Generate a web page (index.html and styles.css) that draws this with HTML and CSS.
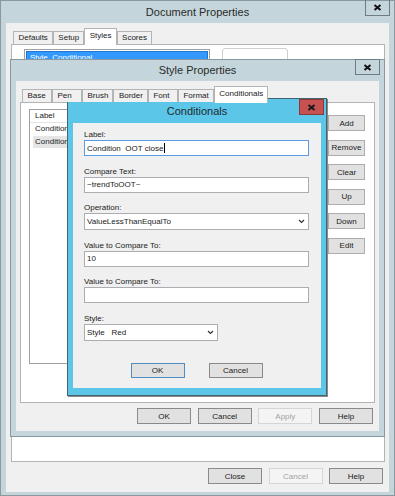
FILE: index.html
```html
<!DOCTYPE html>
<html lang="en">

<head>
    <meta charset="UTF-8">
    <title>Conditionals</title>
    <link rel="stylesheet" href="styles.css">
</head>

<body>
    <div class="desktop">

        <!-- Document Properties -->
        <div class="window doc-win">
            <div class="titlebar doc-title">Document Properties
                <span class="close-btn doc-close">
                    <svg width="9" height="7" viewBox="0 0 9 7"><path d="M1.5 1l6 5M7.5 1l-6 5" stroke="#111" stroke-width="2"/></svg>
                </span>
            </div>
            <div class="client doc-client">
                <div class="tabs doc-tabs">
                    <span class="tab">Defaults</span>
                    <span class="tab">Setup</span>
                    <span class="tab tab-on">Styles</span>
                    <span class="tab">Scores</span>
                </div>
                <div class="page doc-page">
                    <div class="doc-list">
                        <div class="doc-item">Style  Conditional</div>
                    </div>
                    <div class="doc-box"></div>
                </div>
                <div class="btn-row doc-btns">
                    <span class="btn btn-dark">Close</span>
                    <span class="btn btn-off">Cancel</span>
                    <span class="btn btn-dark">Help</span>
                </div>
            </div>
        </div>

        <!-- Style Properties -->
        <div class="window style-win">
            <div class="titlebar style-title">Style Properties
                <span class="close-btn style-close">
                    <svg width="9" height="7" viewBox="0 0 9 7"><path d="M1.5 1l6 5M7.5 1l-6 5" stroke="#111" stroke-width="2"/></svg>
                </span>
            </div>
            <div class="client style-client">
                <div class="tabs style-tabs">
                    <span class="tab">Base</span>
                    <span class="tab">Pen</span>
                    <span class="tab">Brush</span>
                    <span class="tab">Border</span>
                    <span class="tab">Font</span>
                    <span class="tab">Format</span>
                    <span class="tab tab-on">Conditionals</span>
                </div>
                <div class="page style-page">
                    <div class="cond-list">
                        <div class="list-head">Label</div>
                        <div class="list-item">Condition</div>
                        <div class="list-item list-hover">Condition</div>
                    </div>
                    <div class="side-btns">
                        <span class="btn side-btn">Add</span>
                        <span class="btn side-btn">Remove</span>
                        <span class="btn side-btn">Clear</span>
                        <span class="btn side-btn">Up</span>
                        <span class="btn side-btn">Down</span>
                        <span class="btn side-btn">Edit</span>
                    </div>
                </div>
                <div class="btn-row style-btns">
                    <span class="btn btn-dark">OK</span>
                    <span class="btn btn-dark">Cancel</span>
                    <span class="btn btn-off">Apply</span>
                    <span class="btn btn-dark">Help</span>
                </div>
            </div>
        </div>

        <!-- Conditionals -->
        <div class="window cond-win">
            <div class="titlebar cond-title">Conditionals
                <span class="close-btn cond-close">
                    <svg width="9" height="7" viewBox="0 0 9 7"><path d="M1.5 1l6 5M7.5 1l-6 5" stroke="#1a1a1a" stroke-width="2"/></svg>
                </span>
            </div>
            <div class="client cond-client">
                <div class="field">
                    <div class="field-label">Label:</div>
                    <div class="textbox textbox-focus"><span class="val">Condition  OOT close</span><span class="caret"></span></div>
                </div>
                <div class="field">
                    <div class="field-label">Compare Text:</div>
                    <div class="textbox"><span class="val">~trendToOOT~</span></div>
                </div>
                <div class="field">
                    <div class="field-label">Operation:</div>
                    <div class="textbox combo"><span class="val">ValueLessThanEqualTo</span>
                        <svg width="7" height="5" viewBox="0 0 7 5"><path d="M1 1l2.5 2.5L6 1" fill="none" stroke="#333" stroke-width="1.2"/></svg>
                    </div>
                </div>
                <div class="field">
                    <div class="field-label">Value to Compare To:</div>
                    <div class="textbox"><span class="val">10</span></div>
                </div>
                <div class="field">
                    <div class="field-label">Value to Compare To:</div>
                    <div class="textbox"></div>
                </div>
                <div class="field">
                    <div class="field-label">Style:</div>
                    <div class="textbox combo combo-short"><span class="val">Style   Red</span>
                        <svg width="7" height="5" viewBox="0 0 7 5"><path d="M1 1l2.5 2.5L6 1" fill="none" stroke="#333" stroke-width="1.2"/></svg>
                    </div>
                </div>
                <div class="btn-row cond-btns">
                    <span class="btn btn-default">OK</span>
                    <span class="btn btn-dark">Cancel</span>
                </div>
            </div>
        </div>

    </div>
</body>

</html>
```

FILE: styles.css
```css
/* Khung chung */
* {
    box-sizing: border-box;
}

body {
    margin: 0;
    font-family: "Liberation Sans", Arial, sans-serif;
    font-size: 8px;
    color: #1a1a1a;
    background: #c4d6db;
}

.desktop {
    position: relative;
    width: 395px;
    height: 496px;
    overflow: hidden;
}

/* Cửa sổ */
.window {
    display: flex;
    flex-direction: column;
    background: #c4d6db;
    border: 1px solid #8b989d;
}

.titlebar {
    position: relative;
    text-align: center;
    font-size: 11px;
    color: #2b2b2b;
    flex-shrink: 0;
}

.close-btn {
    position: absolute;
    width: 25px;
    height: 16px;
    display: flex;
    align-items: center;
    justify-content: center;
    border: 1px solid #6f7c81;
}

.client {
    background: #f0f0f0;
    display: flex;
    flex-direction: column;
    flex: 1;
    margin: 0 5px 5px;
}

/* Tabs */
.tabs {
    display: flex;
    align-items: flex-end;
    flex-shrink: 0;
    position: relative;
    z-index: 1;
}

.tab {
    min-width: 30px;
    height: 13px;
    line-height: 12px;
    padding: 0 4px 0 4.5px;
    border: 1px solid #b4b4b4;
    border-bottom: none;
    background: #f0f0f0;
    white-space: nowrap;
}

.tab-on {
    background: #fff;
    height: 17px;
    line-height: 14px;
    margin-bottom: -1px;
}

.page {
    background: #fff;
    border: 1px solid #b4b4b4;
    flex-shrink: 0;
}

/* Nút */
.btn-row {
    display: flex;
    justify-content: flex-end;
    flex-shrink: 0;
}

.btn {
    display: flex;
    align-items: center;
    justify-content: center;
    width: 54px;
    height: 16px;
    background: #e1e1e1;
    border: 1px solid #adadad;
}

.btn-dark {
    border-color: #8a8a8a;
}

.btn-default {
    border-color: #4f8cc2;
}

.btn-off {
    background: #f4f4f4;
    border-color: #d5d5d5;
    color: #a3a3a3;
}

/* Document Properties */
.doc-win {
    position: absolute;
    left: 0;
    top: 0;
    width: 395px;
    height: 496px;
}

.doc-title {
    height: 22px;
    line-height: 22px;
}

.doc-close {
    top: -1px;
    right: 4px;
    border-top: none;
}

.doc-client {
    margin: 0 5px 3px;
}

.doc-tabs {
    padding: 5px 0 0 7px;
}

.doc-page {
    margin: 0 4px 0 5px;
    height: 418px;
    display: flex;
    align-items: flex-start;
    padding: 4px 12px;
    gap: 12px;
}

.doc-list {
    width: 186px;
    height: 200px;
    border: 1px solid #a0a0a0;
    padding: 1px;
}

.doc-item {
    height: 13px;
    line-height: 12px;
    padding-left: 3px;
    background: #3399ff;
    border: 1px solid #2277cc;
    color: #fff;
    white-space: pre;
}

.doc-box {
    width: 66px;
    height: 22px;
    margin-top: -1px;
    border: 1px solid #cfcfcf;
    border-radius: 3px;
    background: #fff;
}

.doc-btns {
    margin-top: 6px;
    padding-right: 6px;
    gap: 6.5px;
}

/* Style Properties */
.style-win {
    position: absolute;
    left: 10px;
    top: 59px;
    width: 375px;
    height: 378px;
}

.style-title {
    height: 21px;
    line-height: 21px;
}

.style-close {
    top: -1px;
    right: 4px;
}

.style-tabs {
    padding: 5px 0 0 6px;
}

.style-page {
    margin: 0 4px;
    height: 301px;
    display: flex;
    align-items: flex-start;
    padding: 6px 8px;
}

.cond-list {
    width: 289px;
    height: 255px;
    border: 1px solid #a0a0a0;
}

.list-head {
    height: 13px;
    line-height: 12px;
    padding-left: 5px;
    border-bottom: 1px solid #e3e3e3;
}

.list-item {
    height: 12.5px;
    line-height: 12.5px;
    margin-left: 3px;
    padding-left: 2px;
    white-space: nowrap;
}

.list-hover {
    background: #e5e5e5;
}

.side-btns {
    display: flex;
    flex-direction: column;
    gap: 8.6px;
    margin: 6px 0 0 10px;
}

.side-btn {
    width: 37px;
}

.style-btns {
    margin-top: 5px;
    padding-right: 6px;
    gap: 6.67px;
}

/* Conditionals */
.cond-win {
    position: absolute;
    left: 67px;
    top: 98px;
    width: 260px;
    height: 298px;
    background: #5cc6e9;
    border-color: #45636f;
    box-shadow: 1px 1px 0 rgba(60, 60, 60, 0.6);
}

.cond-title {
    height: 24px;
    line-height: 24px;
    color: #1e2a30;
}

.cond-close {
    top: 0;
    right: 2px;
    background: #c75050;
    border-color: #8b3a3a;
}

.cond-client {
    margin: 0 5px 7px;
    padding: 6px 12px 0 11px;
}

.field {
    display: flex;
    flex-direction: column;
    margin-bottom: 9.6px;
}

.field-label {
    height: 11px;
    line-height: 11px;
}

.textbox {
    height: 16px;
    background: #fff;
    border: 1px solid #abadb3;
    display: flex;
    align-items: center;
    padding-left: 2px;
}

.textbox-focus {
    border-color: #569de5;
}

.val {
    white-space: pre;
}

.caret {
    width: 1px;
    height: 10px;
    background: #000;
    margin-left: 1px;
}

.combo {
    height: 17px;
    justify-content: space-between;
    padding-right: 3px;
}

.combo-short {
    width: 134px;
}

.cond-btns {
    justify-content: center;
    gap: 24px;
    margin-top: 12.4px;
}

.cond-btns .btn {
    height: 15px;
}
```
